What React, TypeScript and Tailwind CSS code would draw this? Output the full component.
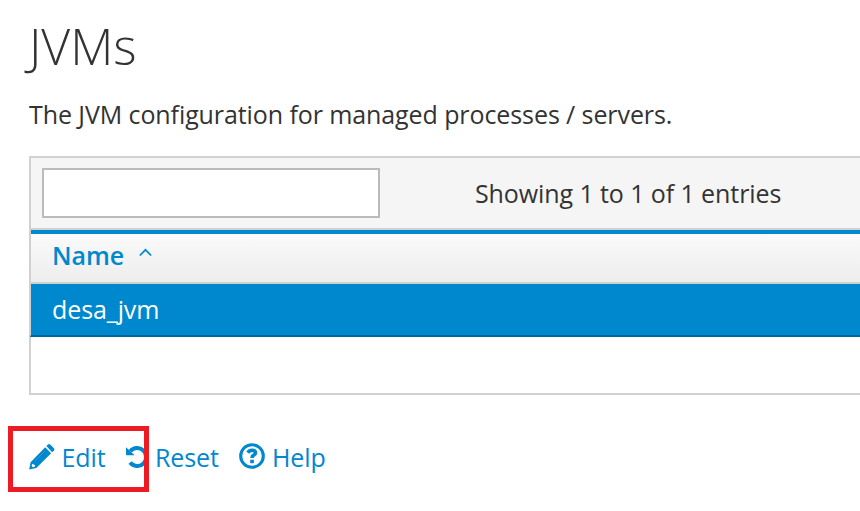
import React from "react";

function PencilIcon() {
  return (
    <svg width="26" height="26" viewBox="0 0 26 26" fill="currentColor">
      <path d="M17.300 2.100 19 .5Q20.100-.3 21.200.6L24.900 4.300Q25.800 5.400 25 6.400L23.200 8.200Z" />
      <path
        fillRule="evenodd"
        d="M16.200 3.200 22.100 9.200 7.300 24 .2 25.400 1.600 18.200ZM3.200 19.700 2.600 22 4 23.200 6 22.600 5.900 20.900 4.600 20.600Z"
      />
      <path d="M6.200 16.800 15.800 7.200" stroke="#ffffff" strokeOpacity=".2" strokeWidth=".8" />
    </svg>
  );
}

function UndoIcon() {
  return (
    <svg width="22" height="22" viewBox="0 0 22 22">
      <path
        d="M4.200 5.300A9 9 0 1 1 4.100 16.600"
        fill="none"
        stroke="currentColor"
        strokeWidth="4"
      />
      <path d="M0 1.200 8.600 9.300H.8Q0 9.300 0 8.500Z" fill="currentColor" />
    </svg>
  );
}

function HelpIcon() {
  return (
    <svg width="26" height="26" viewBox="0 0 26 26">
      <circle cx="13" cy="13" r="11.300" fill="none" stroke="currentColor" strokeWidth="3.100" />
      <path
        d="M8.800 9.700Q10.300 7.300 13 7.300Q16.500 7.400 16.500 9.900Q16.500 11.300 14.600 12.200Q13 13 13 14.900"
        fill="none"
        stroke="currentColor"
        strokeWidth="3.600"
      />
      <path d="M11.200 16.700h3.700v3.500h-3.700z" fill="currentColor" />
    </svg>
  );
}

export default function App() {
  return (
    <main className="relative h-[511px] w-[860px] overflow-hidden bg-white pl-[29px] font-['Open_Sans',sans-serif] text-[25px] leading-[34px] tracking-[-0.09px] text-[#333333]">
      <h1 className="pt-[12px] text-[50px] leading-[68px] font-light tracking-normal">JVMs</h1>
      <p className="mt-[17px] whitespace-nowrap">The JVM configuration for managed processes / servers.</p>

      <section className="mt-[25px] h-[239px] border-y-2 border-l-2 border-[#d1d1d1]">
        <div className="flex h-[72px] items-start border-b-2 border-[#d1d1d1] bg-[#f5f5f5] pt-[10px] pl-[11px]">
          <input aria-label="Filter" className="h-[50px] w-[338px] border-2 border-[#bbbbbb] bg-white px-2 outline-none" />
          <span className="ml-[95px] pt-[8px] whitespace-nowrap">Showing 1 to 1 of 1 entries</span>
        </div>
        <div className="flex h-[54px] border-t-4 border-b-2 border-t-[#0088ce] border-b-[#d1d1d1] bg-linear-to-b from-[#fafafa] to-[#ededed] pt-[4px] pl-[21px] font-semibold text-[#0088ce]">
          <span>Name</span>
          <svg className="mt-[10px] ml-[15px]" width="13" height="10" viewBox="0 0 13 10" fill="none" stroke="currentColor" strokeWidth="1.700">
            <path d="M.8 7.500 6.500 1.800 12.200 7.500" />
          </svg>
        </div>
        <div className="-ml-px h-[53px] border-b-2 border-l border-b-[#00659c] border-l-transparent">
          <div className="h-full bg-[#0088ce] pt-[8px] pl-[21px] text-white">desa_jvm</div>
        </div>
      </section>

      <nav className="mt-[45px] flex text-[#0088ce]">
        <a className="flex w-[96px]">
          <span className="mt-[4px] mr-[6.500px]"><PencilIcon /></span>Edit
        </a>
        <a className="flex w-[114px]">
          <span className="mt-[6px] mr-[7px] ml-px"><UndoIcon /></span>Reset
        </a>
        <a className="flex">
          <span className="mt-[3px] mr-[7px]"><HelpIcon /></span>Help
        </a>
      </nav>
      <div className="absolute top-[426px] left-[8px] h-[66px] w-[141px] border-[5px] border-[#ed1c24]" />
    </main>
  );
}
